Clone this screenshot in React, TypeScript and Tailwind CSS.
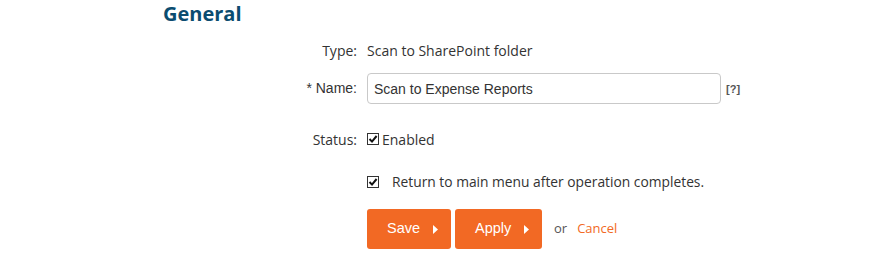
export default function App() {
  return (
    <div className="w-[886px] h-[253px] bg-white overflow-hidden text-[#333] font-['Open_Sans',sans-serif]">
      {/* Heading */}
      <h2 className="pl-[163px] text-[20px] leading-[27px] font-bold text-[#0b4c70]">General</h2>

      {/* Type */}
      <div className="mt-[13px] flex items-center h-[20px]">
        <div className="w-[357px] text-right text-[14px]">Type:</div>
        <div className="ml-[10px] text-[14px]">Scan to SharePoint folder</div>
      </div>

      {/* Name */}
      <div className="mt-[13px] flex items-center h-[31px]">
        <div className="w-[357px] text-right text-[14px] font-['Liberation_Sans',sans-serif]">* Name:</div>
        <input
          readOnly
          value="Scan to Expense Reports"
          className="ml-[10px] w-[354px] h-[31px] rounded-[4px] border border-[#c9c9c9] pl-[6px] text-[14px] text-[#333] font-['Liberation_Sans',sans-serif] outline-none"
        />
        <span className="ml-[5px] mt-[2px] text-[11px] font-bold text-[#555] font-['Liberation_Sans',sans-serif]">[?]</span>
      </div>

      {/* Status */}
      <div className="mt-[25px] flex items-center h-[20px]">
        <div className="w-[357px] text-right text-[14px]">Status:</div>
        <div className="ml-[10px] flex items-center">
          <CheckBox />
          <span className="ml-[3px] text-[14px]">Enabled</span>
        </div>
      </div>

      {/* Return to main menu */}
      <div className="mt-[23px] flex items-center h-[20px]">
        <div className="ml-[367px] flex items-center">
          <CheckBox />
          <span className="ml-[13px] text-[13.8px]">Return to main menu after operation completes.</span>
        </div>
      </div>

      {/* Actions */}
      <div className="mt-[17px] ml-[367px] flex items-center gap-[4px]">
        <ActionButton label="Save" width="w-[84px]" />
        <ActionButton label="Apply" width="w-[87px]" />
        <span className="ml-[8px] text-[13px] text-[#555]">or</span>
        <span className="ml-[6px] text-[13px] text-[#f26924]">Cancel</span>
      </div>
    </div>
  );
}

function CheckBox() {
  return (
    <svg width="12" height="12" viewBox="0 0 12 12" className="shrink-0">
      <rect x="0.5" y="0.5" width="11" height="11" fill="white" stroke="#333" strokeWidth="1" />
      <path d="M2.5 6 L5 8.6 L9.6 3" fill="none" stroke="#111" strokeWidth="2" />
    </svg>
  );
}

function ActionButton({ label, width }: { label: string; width: string }) {
  return (
    <button
      className={`${width} h-[40px] rounded-[3px] bg-[#f26924] text-white text-[14.5px] font-['Liberation_Sans',sans-serif] flex items-center pl-[20px]`}
    >
      <span>{label}</span>
      <svg width="5" height="9" viewBox="0 0 5 9" className="ml-auto mr-[13px]">
        <path d="M0 0 L5 4.5 L0 9 Z" fill="white" />
      </svg>
    </button>
  );
}
